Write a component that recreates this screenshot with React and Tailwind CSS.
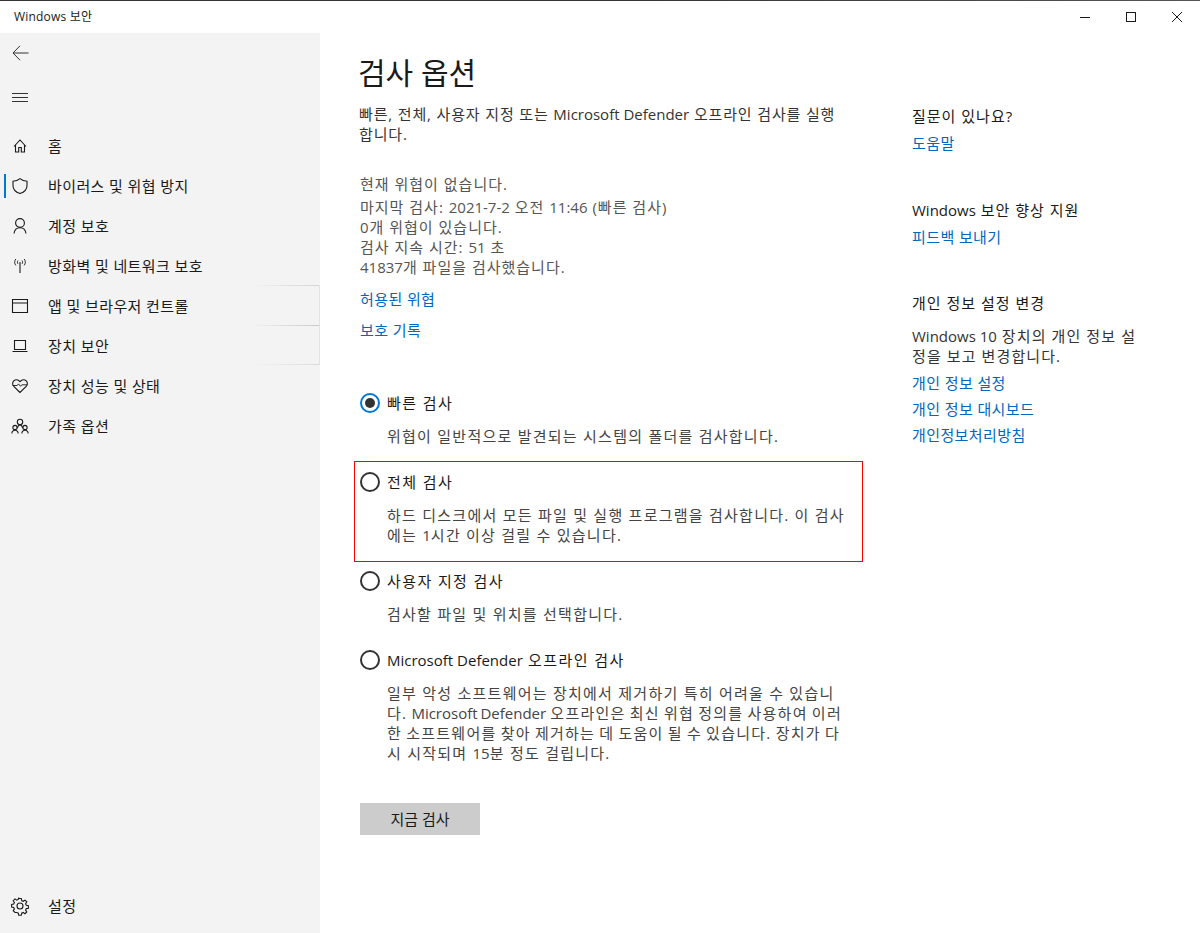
import React from "react";

const font = { fontFamily: '"Open Sans", "Noto Sans CJK KR", sans-serif' };

/* ------------------ Icons ------------------ */
function Icon({ children, w = 20, h = 20 }) {
  return (
    <svg width={w} height={h} viewBox="0 0 20 20" fill="none" stroke="#1a1a1a" strokeWidth="1.1">
      {children}
    </svg>
  );
}

const icons = {
  home: (
    <Icon>
      <path d="M4 10.500 10 4l6 6.500M5.500 9v7h3.200v-4.500h2.600V16h3.200V9" />
    </Icon>
  ),
  shield: (
    <Icon>
      <path d="M10 2.600c2 1.700 4.400 2.600 7 2.700v4.200c0 3.800-2.600 6.600-7 8.100-4.400-1.500-7-4.300-7-8.100V5.300c2.600-.1 5-1 7-2.700Z" />
    </Icon>
  ),
  user: (
    <Icon>
      <circle cx="10" cy="7" r="4.400" />
      <path d="M4 17.500c.5-3.600 2.800-5.800 6-5.800s5.500 2.200 6 5.800" />
    </Icon>
  ),
  wifi: (
    <Icon>
      <path d="M10 6V17" />
      <path d="M8 4.500c-.8 1-.8 2.400 0 3.400M12 4.500c.8 1 .8 2.400 0 3.400M5.800 3c-1.500 2-1.500 4.400 0 6.400M14.200 3c1.500 2 1.500 4.400 0 6.400" strokeWidth="0.9" />
    </Icon>
  ),
  browser: (
    <Icon>
      <path d="M2.500 3.500h15v13h-15zM2.500 7h15" />
    </Icon>
  ),
  laptop: (
    <Icon>
      <path d="M4.500 4.500h11v9h-11zM2.500 15.500h15" />
    </Icon>
  ),
  heart: (
    <Icon>
      <path d="M10 16.500 3.800 10.400C1.800 8.400 2.400 5 5 4c1.900-.7 3.700 0 5 1.700C11.300 4 13.100 3.300 15 4c2.600 1 3.200 4.400 1.200 6.400L10 16.500Z" />
      <path d="M2.800 9.500h4.400l1.300-1.600 2 2.400 1.300-1.500h5.400" strokeWidth="0.9" />
    </Icon>
  ),
  family: (
    <Icon>
      <circle cx="10" cy="6" r="2.700" />
      <circle cx="5" cy="11.500" r="2.100" />
      <circle cx="15" cy="11.500" r="2.100" />
      <path d="M1.800 17.500c.2-2 1.500-3.200 3.200-3.200s3 1.200 3.200 3.200M11.800 17.500c.2-2 1.500-3.200 3.200-3.200s3 1.200 3.200 3.200M7.300 12c.5-2 1.400-3 2.700-3s2.200 1 2.700 3" />
    </Icon>
  ),
  gear: (
    <Icon>
      <circle cx="10" cy="10" r="3" />
      <path d="M8.700 2.500h2.600l.4 2.100 1.500.7 1.800-1.200 1.800 1.800-1.200 1.800.7 1.500 2.100.4v2.600l-2.100.4-.7 1.500 1.200 1.800-1.800 1.800-1.800-1.200-1.500.7-.4 2.100H8.700l-.4-2.100-1.500-.7L5 16.500l-1.800-1.800 1.200-1.800-.7-1.500-2.100-.4V8.400l2.100-.4.700-1.500L3.200 4.700 5 2.900l1.800 1.200 1.500-.7.400-1.900Z" />
    </Icon>
  ),
};

const navItems = [
  { icon: "home", label: "홈" },
  { icon: "shield", label: "바이러스 및 위협 방지", active: true },
  { icon: "user", label: "계정 보호" },
  { icon: "wifi", label: "방화벽 및 네트워크 보호" },
  { icon: "browser", label: "앱 및 브라우저 컨트롤" },
  { icon: "laptop", label: "장치 보안" },
  { icon: "heart", label: "장치 성능 및 상태" },
  { icon: "family", label: "가족 옵션" },
];

/* ------------------ Parts ------------------ */
// latin words keep their normal spacing, hangul around them is spaced out
function L({ children }) {
  return <span className="tracking-normal">{children}</span>;
}

function NavRow({ icon, label, active }) {
  return (
    <div className="relative flex h-10 items-center pl-[10px]">
      {active && <div className="absolute left-[4px] top-[8px] h-6 w-[2px] bg-[#0078d7]" />}
      <div className="flex w-[38px] items-center">{icons[icon]}</div>
      <span className="text-[15px] tracking-[0.4px] text-[#1a1a1a]">{label}</span>
    </div>
  );
}

function Radio({ checked }) {
  return (
    <div
      className={
        checked
          ? "flex h-5 w-5 shrink-0 items-center justify-center rounded-full border-2 border-[#0078d7]"
          : "h-5 w-5 shrink-0 rounded-full border-2 border-[#333333]"
      }
    >
      {checked && <div className="h-[10px] w-[10px] rounded-full bg-[#333333]" />}
    </div>
  );
}

function ScanOption({ label, checked, children }) {
  return (
    <div>
      <div className="flex h-5 items-center gap-[7px]">
        <Radio checked={checked} />
        <span className="text-[15px] leading-5 tracking-[1.4px] text-[#1a1a1a]">{label}</span>
      </div>
      <div className="mt-[13px] pl-[27px] text-[15px] leading-5 tracking-[1.25px] text-[#444444]">{children}</div>
    </div>
  );
}

function SideBlock({ title, children }) {
  return (
    <div>
      <div className="text-[15px] leading-5 tracking-[1px] text-[#1a1a1a]">{title}</div>
      {children}
    </div>
  );
}

const linkClass = "text-[15px] leading-5 tracking-[0.4px] text-[#0067c0]";

/* ------------------ Page ------------------ */
export default function App() {
  return (
    <div className="flex h-[933px] w-[1200px] flex-col overflow-hidden bg-white" style={font}>
      <div className="h-px bg-gradient-to-r from-[#333333] via-[#333333] to-[#555555]" />

      {/* title bar */}
      <div className="flex h-8 items-center justify-between">
        <span className="pl-[14px] text-[12px] tracking-[0.2px] text-[#1a1a1a]">Windows 보안</span>
        <div className="flex h-full items-center">
          <div className="flex w-[46px] justify-center">
            <div className="h-px w-[10px] bg-[#1a1a1a]" />
          </div>
          <div className="flex w-[46px] justify-center">
            <div className="h-[10px] w-[10px] border border-[#1a1a1a]" />
          </div>
          <div className="flex w-[46px] justify-center">
            <svg width="10" height="10" viewBox="0 0 10 10" stroke="#1a1a1a" strokeWidth="1">
              <path d="M0 0l10 10M10 0 0 10" />
            </svg>
          </div>
        </div>
      </div>

      <div className="flex min-h-0 flex-1">
        {/* sidebar */}
        <aside className="relative flex w-[320px] shrink-0 flex-col bg-[#f3f3f3]">
          <div className="flex h-10 items-center pl-[12px]">
            <svg width="17" height="16" viewBox="0 0 17 16" fill="none" stroke="#333333" strokeWidth="1">
              <path d="M16.500 8H1M8 .8 1 8l7 7.200" />
            </svg>
          </div>
          <div className="mt-[5px] flex h-10 items-center pl-[12px]">
            <svg width="16" height="10" viewBox="0 0 16 10" stroke="#333333" strokeWidth="1">
              <path d="M0 .5h16M0 4.500h16M0 8.500h16" />
            </svg>
          </div>
          <nav className="mt-[8px]">
            {navItems.map((item) => (
              <NavRow key={item.label} {...item} />
            ))}
          </nav>
          <div className="mt-auto mb-[7px]">
            <NavRow icon="gear" label="설정" />
          </div>

          {/* leftover shadow lines from the window behind */}
          <div className="absolute right-0 top-[252px] h-px w-[70px] bg-gradient-to-r from-transparent to-[#d4d4d4]" />
          <div className="absolute right-0 top-[292px] h-px w-[70px] bg-gradient-to-r from-transparent to-[#c8c8c8]" />
          <div className="absolute right-0 top-[331px] h-px w-[70px] bg-gradient-to-r from-transparent to-[#dcdcdc]" />
          <div className="absolute right-0 top-[252px] h-[80px] w-px bg-[#e2e2e2]" />
        </aside>

        {/* main */}
        <main className="w-[525px] shrink-0 pl-[40px]">
          <h1 className="mt-[20px] text-[30px] leading-10 text-[#1a1a1a] -ml-[2px]">검사 옵션</h1>
          <p className="mt-[11px] -ml-[1px] text-[15px] leading-5 tracking-[0.85px] text-[#333333]">
            빠른, 전체, 사용자 지정 또는 <L>Microsoft Defender</L> 오프라인 검사를 실행합니다.
          </p>

          <div className="mt-[30px] text-[15px] leading-5 tracking-[1px] text-[#555555]">
            <div className="mb-[3px]">현재 위협이 없습니다.</div>
            <div>마지막 검사: <L>2021-7-2</L> 오전 <L>11:46</L> (빠른 검사)</div>
            <div>0개 위협이 있습니다.</div>
            <div>검사 지속 시간: <L>51</L> 초</div>
            <div><L>41837</L>개 파일을 검사했습니다.</div>
          </div>

          <div className={"mt-[12px] " + linkClass}>허용된 위협</div>
          <div className={"mt-[11px] " + linkClass}>보호 기록</div>

          <div className="mt-[53px]">
            <ScanOption label="빠른 검사" checked>
              위협이 일반적으로 발견되는 시스템의 폴더를 검사합니다.
            </ScanOption>
          </div>

          <div className="relative mt-[26px]">
            <div className="absolute -left-[6px] -top-[11px] h-[101px] w-[509px] border border-[#ff0000]" />
            <ScanOption label="전체 검사">
              하드 디스크에서 모든 파일 및 실행 프로그램을 검사합니다. 이 검사에는 <L>1</L>시간 이상 걸릴 수 있습니다.
            </ScanOption>
          </div>

          <div className="mt-[26px]">
            <ScanOption label="사용자 지정 검사">검사할 파일 및 위치를 선택합니다.</ScanOption>
          </div>

          <div className="mt-[26px]">
            <ScanOption label={<><L>Microsoft Defender</L> 오프라인 검사</>}>
              <div>일부 악성 소프트웨어는 장치에서 제거하기 특히 어려울 수 있습니</div>
              <div className="[word-spacing:-1px]">다. <L>Microsoft Defender</L> 오프라인은 최신 위협 정의를 사용하여 이러</div>
              <div className="[word-spacing:-1px]">한 소프트웨어를 찾아 제거하는 데 도움이 될 수 있습니다. 장치가 다</div>
              <div>시 시작되며 <L>15</L>분 정도 걸립니다.</div>
            </ScanOption>
          </div>

          <div className="mt-[40px] flex h-8 w-[120px] items-center justify-center bg-[#cccccc] text-[15px] text-[#1a1a1a]">
            지금 검사
          </div>
        </main>

        {/* right column */}
        <section className="ml-[67px] w-[232px] pt-[73px]">
          <SideBlock title="질문이 있나요?">
            <div className={"mt-[7px] " + linkClass}>도움말</div>
          </SideBlock>
          <div className="mt-[47px]">
            <SideBlock title={<><L>Windows</L> 보안 향상 지원</>}>
              <div className={"mt-[7px] " + linkClass}>피드백 보내기</div>
            </SideBlock>
          </div>
          <div className="mt-[46px]">
            <SideBlock title="개인 정보 설정 변경">
              <p className="mt-[13px] text-[15px] leading-5 tracking-[1.1px] text-[#333333]">
                <L>Windows 10</L> 장치의 개인 정보 설정을 보고 변경합니다.
              </p>
              <div className={"mt-[7px] " + linkClass}>개인 정보 설정</div>
              <div className={"mt-[6px] " + linkClass}>개인 정보 대시보드</div>
              <div className={"mt-[6px] " + linkClass}>개인정보처리방침</div>
            </SideBlock>
          </div>
        </section>
      </div>
    </div>
  );
}
